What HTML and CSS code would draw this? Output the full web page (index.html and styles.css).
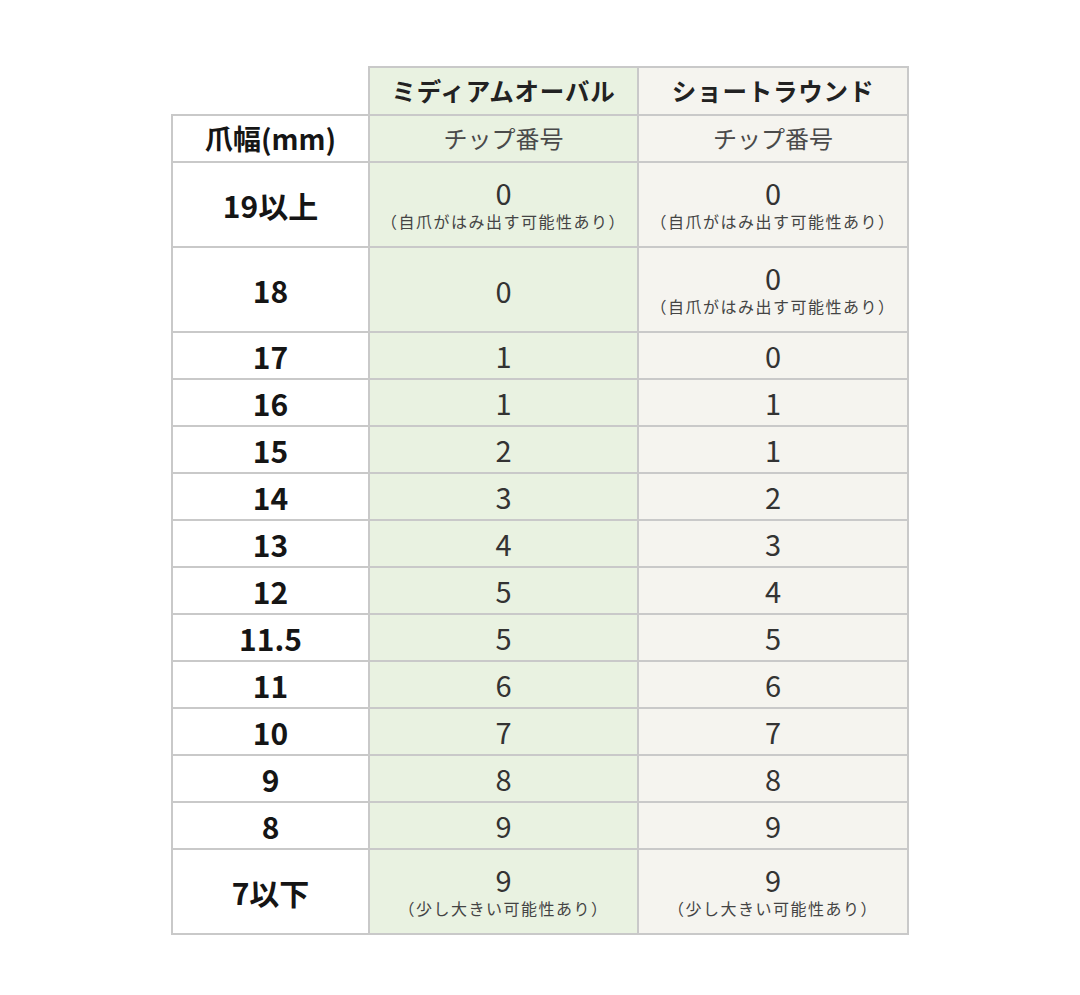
FILE: index.html
```html
<!DOCTYPE html>
<html lang="ja">
<head>
<meta charset="utf-8">
<link rel="stylesheet" href="styles.css">
</head>
<body>
<div class="page">
<table class="chart">
  <colgroup>
    <col class="c-size">
    <col class="c-oval">
    <col class="c-round">
  </colgroup>
  <tr class="r-head">
    <td class="blank"></td>
    <th class="oval head">ミディアムオーバル</th>
    <th class="round head">ショートラウンド</th>
  </tr>
  <tr class="r-sub">
    <th class="size">爪幅(mm)</th>
    <td class="oval sub">チップ番号</td>
    <td class="round sub">チップ番号</td>
  </tr>
  <tr class="r-tall">
    <th class="size">19以上</th>
    <td class="oval"><span class="num">0</span><span class="note">（自爪がはみ出す可能性あり）</span></td>
    <td class="round"><span class="num">0</span><span class="note">（自爪がはみ出す可能性あり）</span></td>
  </tr>
  <tr class="r-tall">
    <th class="size">18</th>
    <td class="oval"><span class="num">0</span></td>
    <td class="round"><span class="num">0</span><span class="note">（自爪がはみ出す可能性あり）</span></td>
  </tr>
  <tr class="r"><th class="size">17</th><td class="oval">1</td><td class="round">0</td></tr>
  <tr class="r"><th class="size">16</th><td class="oval">1</td><td class="round">1</td></tr>
  <tr class="r"><th class="size">15</th><td class="oval">2</td><td class="round">1</td></tr>
  <tr class="r"><th class="size">14</th><td class="oval">3</td><td class="round">2</td></tr>
  <tr class="r"><th class="size">13</th><td class="oval">4</td><td class="round">3</td></tr>
  <tr class="r"><th class="size">12</th><td class="oval">5</td><td class="round">4</td></tr>
  <tr class="r"><th class="size">11.5</th><td class="oval">5</td><td class="round">5</td></tr>
  <tr class="r"><th class="size">11</th><td class="oval">6</td><td class="round">6</td></tr>
  <tr class="r"><th class="size">10</th><td class="oval">7</td><td class="round">7</td></tr>
  <tr class="r"><th class="size">9</th><td class="oval">8</td><td class="round">8</td></tr>
  <tr class="r"><th class="size">8</th><td class="oval">9</td><td class="round">9</td></tr>
  <tr class="r-tall">
    <th class="size">7以下</th>
    <td class="oval"><span class="num">9</span><span class="note">（少し大きい可能性あり）</span></td>
    <td class="round"><span class="num">9</span><span class="note">（少し大きい可能性あり）</span></td>
  </tr>
</table>
</div>
</body>
</html>
```
FILE: styles.css
```css
html, body {
  margin: 0;
  padding: 0;
  background: #ffffff;
}
.page {
  padding: 66px 0 0 171px;
  font-family: "Noto Sans CJK JP", "Noto Sans", sans-serif;
  color: #333333;
  text-spacing-trim: space-all;
}
.chart {
  border-collapse: collapse;
  table-layout: fixed;
  width: 736px;
}
.c-size { width: 197px; }
.c-oval { width: 269px; }
.c-round { width: 270px; }
.chart th, .chart td {
  border: 2px solid #c9c9c9;
  padding: 0;
  text-align: center;
  vertical-align: middle;
  font-size: 29px;
  line-height: 1.2;
  font-weight: 400;
  color: #333333;
}
.chart td.blank {
  border-top: none;
  border-left: none;
  background: #ffffff;
}
.chart th {
  font-weight: 700;
  color: #1c1c1c;
}
.chart th.head {
  font-size: 24.5px;
  letter-spacing: 0.8px;
  color: #222222;
}
.chart th.size {
  font-size: 30px;
  background: #ffffff;
  color: #151515;
}
.r-sub th.size {
  font-size: 28px;
}
.oval { background: #e9f2e1; }
.round { background: #f5f4ef; }
.chart td.sub {
  font-size: 24px;
  color: #4a4a4a;
}
.r-head { height: 48px; }
.r-sub { height: 47px; }
.r { height: 47px; }
.r-tall { height: 85px; }
.num {
  display: block;
  font-size: 29px;
  line-height: 32px;
}
.note {
  display: block;
  font-size: 16px;
  letter-spacing: 1.5px;
  line-height: 26px;
  color: #444444;
}
```
